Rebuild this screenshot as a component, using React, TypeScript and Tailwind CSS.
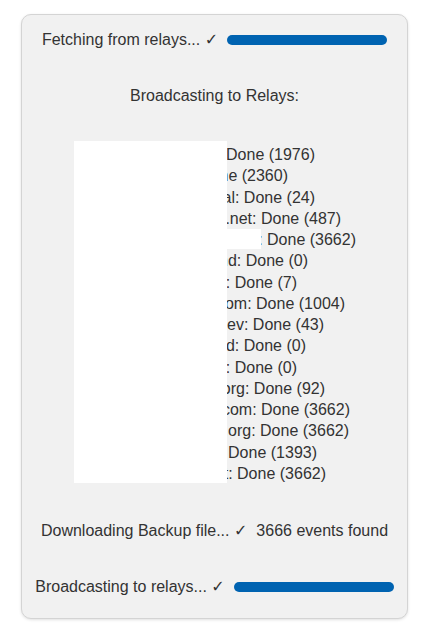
import React from "react";

const lines: { text: string; w: string }[] = [
  { text: "relay.damus.io: Done (1976)", w: "w-[241px]" },
  { text: "nos.lol: Done (2360)", w: "w-[214px]" },
  { text: "nostr.social: Done (24)", w: "w-[241px]" },
  { text: "relay.nostr.net: Done (487)", w: "w-[267px]" },
  { text: "relay.primal.net: Done (3662)", w: "w-[282px]" },
  { text: "nostr.band: Done (0)", w: "w-[234px]" },
  { text: "nostr.bg: Done (7)", w: "w-[223px]" },
  { text: "nostrplebs.com: Done (1004)", w: "w-[271px]" },
  { text: "nostr.oxtr.dev: Done (43)", w: "w-[250px]" },
  { text: "relay.band: Done (0)", w: "w-[232px]" },
  { text: "nostr.net: Done (0)", w: "w-[223px]" },
  { text: "nostr.mom.org: Done (92)", w: "w-[251px]" },
  { text: "relay.nostr.com: Done (3662)", w: "w-[276px]" },
  { text: "relay.nostr.org: Done (3662)", w: "w-[275px]" },
  { text: "nostr.wine: Done (1393)", w: "w-[243px]" },
  { text: "relay.net: Done (3662)", w: "w-[252px]" },
];

function Bar() {
  return <div className="h-[10px] w-[160px] rounded-full bg-[#0063b1]" />;
}

export default function App() {
  return (
    <div
      className="min-h-[640px] bg-white pt-[14px] text-[16px] leading-[18px] text-[#333333]"
      style={{ fontFamily: '"Liberation Sans", Arial, "DejaVu Sans", sans-serif' }}
    >
      <div className="ml-[21px] w-[387px] rounded-[10px] border border-[#d4d4d4] bg-[#f1f1f1] pb-[22px] pt-[16px] shadow-[0_1px_3px_rgba(0,0,0,0.12)]">
        <div className="flex items-center justify-center gap-[9px]">
          <span className="whitespace-nowrap">Fetching from relays... ✓</span>
          <Bar />
        </div>

        <div className="mt-[38px] text-center">Broadcasting to Relays:</div>

        <div className="relative ml-[52px] mt-[39px] leading-[21.27px]">
          {lines.map((l, i) => (
            <div key={i} className={`flex justify-end whitespace-nowrap ${l.w}`}>
              <span className="shrink-0">{l.text}</span>
            </div>
          ))}
          <div className="absolute left-0 top-[-3px] h-[342px] w-[153px] bg-white" />
          <div className="absolute left-[153px] top-[85px] h-[20px] w-[34px] bg-white" />
        </div>

        <div className="mt-[38px] flex justify-center whitespace-nowrap">
          <span>Downloading Backup file... ✓</span>
          <span className="ml-[9px]">3666 events found</span>
        </div>

        <div className="mt-[38px] flex items-center justify-center gap-[9px]">
          <span className="whitespace-nowrap">Broadcasting to relays... ✓</span>
          <Bar />
        </div>
      </div>
    </div>
  );
}
